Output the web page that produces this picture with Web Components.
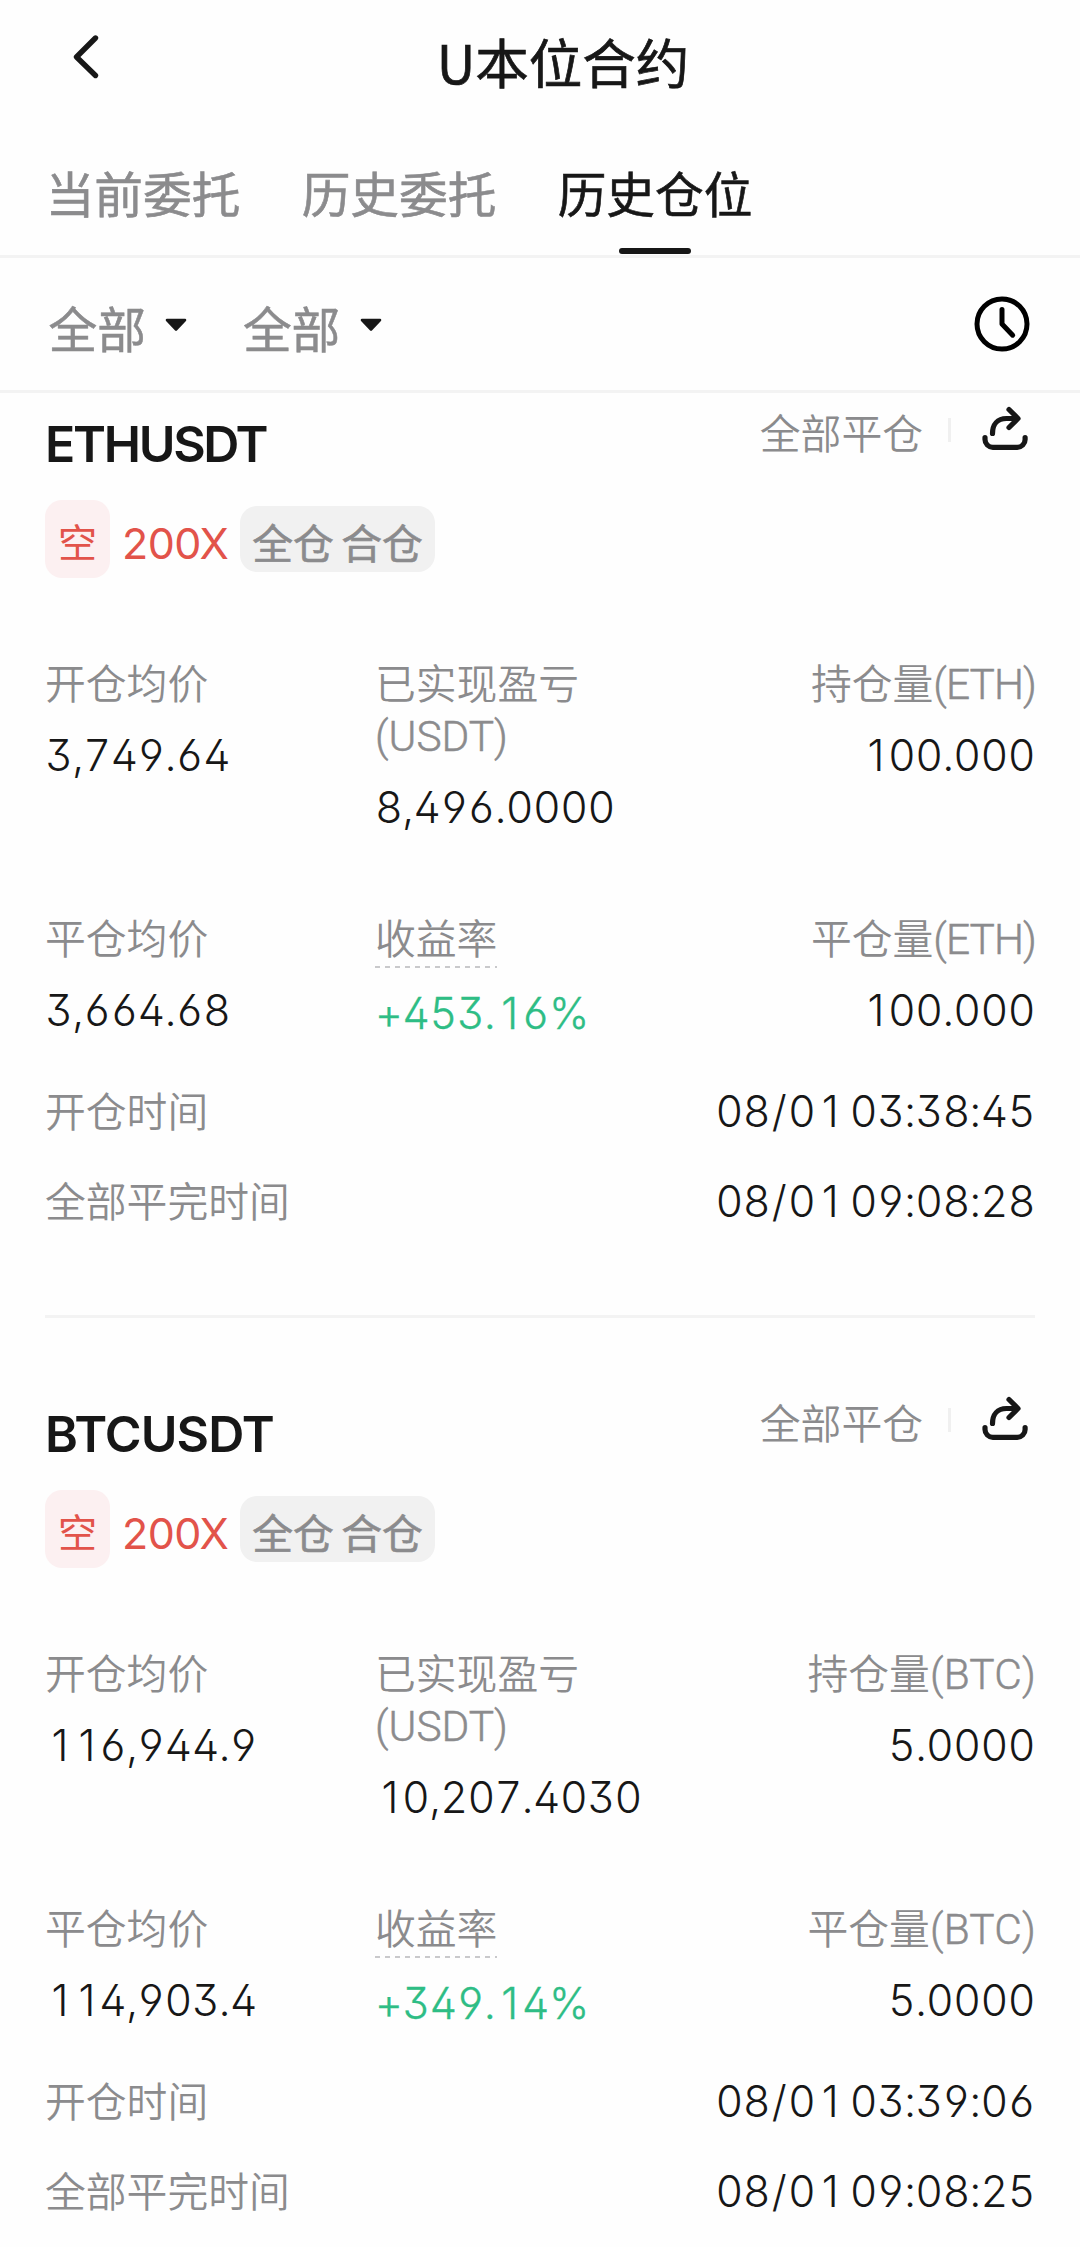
<!DOCTYPE html>
<html lang="zh-CN">
<head>
<meta charset="utf-8">
<title>U本位合约</title>
<style>
html,body{margin:0;background:#fefefe}
body{width:1080px;height:2247px;overflow:hidden;font-family:Inter,"Noto Sans CJK SC",sans-serif;color:#171717;--muted:#8b8b8d;--line:#f3f3f3}
</style>
</head>
<body>
<app-header>U本位合约</app-header>
<tab-bar>
  <tab-item>当前委托</tab-item><tab-item>历史委托</tab-item><tab-item active>历史仓位</tab-item>
</tab-bar>
<filter-bar><filter-drop>全部</filter-drop><filter-drop>全部</filter-drop></filter-bar>
<position-card symbol="ETHUSDT" spacing="-2.3" coin="ETH" coin-spacing="-0.9" open="3,749.64" pnl="8,496.0000" qty="100.000" close="3,664.68" roi="+453.16%" closed="100.000" t1="08/01 03:38:45" t2="08/01 09:08:28"></position-card>
<position-card last symbol="BTCUSDT" spacing="-0.9" coin="BTC" coin-spacing="0.2" open="116,944.9" pnl="10,207.4030" qty="5.0000" close="114,903.4" roi="+349.14%" closed="5.0000" t1="08/01 03:39:06" t2="08/01 09:08:25"></position-card>
<script>
const define = (name, html) => customElements.define(name, class extends HTMLElement {
  connectedCallback() {
    if (this.shadowRoot) return;
    const root = this.attachShadow({mode: 'open'});
    root.innerHTML = typeof html === 'function' ? html(this) : html;
  }
});

define('app-header', `<style>
:host{display:flex;height:128px;align-items:center;justify-content:center;position:relative;font-family:"Noto Sans CJK SC",sans-serif;font-size:53.500px;line-height:60px;-webkit-text-stroke:.7px}
svg{position:absolute;left:68px;top:32px}
.t{padding:0 0 6px 46px}
</style><svg width="36" height="50" viewBox="0 0 36 50" fill="none" stroke="#171717" stroke-width="5.400" stroke-linecap="round" stroke-linejoin="round"><path d="M27.500 6 8.500 25 27.500 43.500"/></svg><span class="t"><slot></slot></span>`);

define('tab-bar', `<style>:host{display:flex;height:127px;padding-left:45px;gap:60px;border-bottom:3px solid var(--line)}</style><slot></slot>`);
define('tab-item', `<style>
:host{display:flex;flex-direction:column;align-items:center;justify-content:space-between;font-size:48.700px;line-height:60px;color:var(--muted);-webkit-text-stroke:.6px;width:196px;white-space:nowrap}
:host([active]){color:#171717}
span{padding-top:38px}
b{display:none;width:72px;height:6px;border-radius:3px;background:#171717;margin-bottom:1px}
:host([active]) b{display:block}
</style><span><slot></slot></span><b></b>`);

define('filter-bar', `<style>
:host{display:flex;height:132px;padding:0 49px 0 48.500px;border-bottom:3px solid var(--line);align-items:center}
.l{display:flex;flex:1;gap:55.500px;padding-top:13px}
</style><div class="l"><slot></slot></div><svg width="60" height="60" viewBox="0 0 60 60" style="margin:0 -1px 1px 0" fill="none" stroke="#000" stroke-width="5" stroke-linecap="round" stroke-linejoin="round"><circle cx="30" cy="30" r="25"/><path d="M30 15.500V30l10.700 11.200"/></svg>`);
define('filter-drop', `<style>
:host{display:flex;align-items:center;font-size:48.700px;line-height:60px;color:var(--muted);gap:19.500px;-webkit-text-stroke:.5px}
svg{margin-top:-11px}
</style><slot></slot><svg width="22" height="14" viewBox="0 0 22 14"><path d="M2 2H20L11 11.500Z" fill="#171717" stroke="#171717" stroke-width="2.600" stroke-linejoin="round"/></svg>`);

// Tabular figures, except that "1" keeps its plain shape inside a full-width cell.
define('num-text', e => `<style>
:host{display:block;font-size:43px;line-height:52px;font-weight:300;letter-spacing:-.6px;word-spacing:-3.500px;font-kerning:none;font-feature-settings:"tnum","ss01","cv09";white-space:nowrap}
.one{font-feature-settings:"tnum" 0;padding:0 4.200px 0 6.500px}
.slash{padding:0 1.900px}
</style>${e.getAttribute('value').replace(/[1/]/g, c => `<span class="${c === '1' ? 'one' : 'slash'}">${c}</span>`)}`);

define('data-cell', e => `<style>
:host{display:flex;flex-direction:column;gap:19px;align-items:flex-start;font-size:40.800px;line-height:52px;color:var(--muted)}
:host([end]){align-items:flex-end}
:host([dashed]) .k{background:repeating-linear-gradient(90deg,#c9c9cb 0 5px,transparent 5px 10px) 0 100%/100% 2px no-repeat;padding-bottom:2px;margin-bottom:0}
.k{font-family:Roboto,"Noto Sans CJK SC",sans-serif;font-weight:350;width:max-content;margin:1px 0 -1px}
num-text{color:#171717}
:host([end]) num-text{margin-right:1px}
:host([dashed]) num-text{color:#2ebd85;-webkit-text-stroke:.3px}
</style><span class="k"><slot name="k"></slot></span><num-text value="${e.getAttribute('value')}"></num-text>`);

define('time-row', e => `<style>
:host{display:flex;justify-content:space-between;align-items:center;font-size:40.800px;line-height:52px;color:var(--muted)}
span{font-weight:350;padding-top:1px;margin-bottom:-1px}
num-text{color:#171717;margin-right:1px}
</style><span><slot></slot></span><num-text value="${e.getAttribute('value')}"></num-text>`);

define('share-icon', `<style>:host{display:block;width:50px;height:48px}</style><svg width="50" height="48" viewBox="0 0 50 48" fill="none" stroke="#171717" stroke-width="5.200" stroke-linecap="round" stroke-linejoin="round"><path d="M5 34.500v2a7.800 7.800 0 0 0 7.800 7.800h24.500a7.800 7.800 0 0 0 7.800-7.800v-2M12.500 30.500c0-9 5-15 14-15H37.500M29 6.500l9 9-9 9"/></svg>`);

define('position-card', e => {
  const a = n => e.getAttribute(n);
  return `<style>
:host{display:block;box-sizing:border-box;height:990px;padding:0 44px 0 45px}
:host([last]){height:auto}
.head{display:flex;justify-content:space-between;height:107px}
h2{margin:0;padding:21px 0 0;font-size:50px;line-height:60px;font-weight:600;letter-spacing:${a('spacing')}px}
.act{display:flex;align-items:flex-start;font-size:40.800px;line-height:52px;color:var(--muted)}
.act span{padding-top:15px;font-weight:350}
.act i{width:3px;height:24px;background:#f0f0f0;margin:25px 29px 0 25px}
.act share-icon{margin:10px 6px 0 0}
.tags{display:flex;align-items:center;height:78px}
.s{width:65px;height:78px;border-radius:17px;background:#fcf0f1;color:#e2534a;font-size:39px;line-height:86px;text-align:center}
.x{color:#e2534a;font-size:43px;line-height:60px;padding:8px 0 0 12px;width:118px;letter-spacing:-.5px;font-weight:400}
.m{width:195px;height:66px;border-radius:17px;background:#f1f1f1;color:var(--muted);font-size:40.800px;line-height:77px;text-align:center;word-spacing:-4px;white-space:nowrap;-webkit-text-stroke:.6px}
.grid{display:grid;grid-template-columns:330px 300px 1fr;padding-top:80px}
.g1{height:176px}
.g2{padding-top:79px;height:76px}
.u,.c{font-size:42.400px;line-height:0;-webkit-text-stroke:.5px}
.c{letter-spacing:${a('coin-spacing')}px}
.times{display:flex;flex-direction:column;gap:38px;padding-top:96px}
.rule{height:3px;background:var(--line);margin:88px 1px 0 0}
:host([last]) .rule{display:none}
</style>
<div class="head"><h2>${a('symbol')}</h2><div class="act"><span>全部平仓</span><i></i><share-icon></share-icon></div></div>
<div class="tags"><div class="s">空</div><div class="x">200X</div><div class="m">全仓 合仓</div></div>
<div class="grid g1"><data-cell value="${a('open')}"><span slot="k">开仓均价</span></data-cell><data-cell value="${a('pnl')}"><span slot="k">已实现盈亏<br><span class="u">(USDT)</span></span></data-cell><data-cell end value="${a('qty')}"><span slot="k">持仓量<span class="c">(${a('coin')})</span></span></data-cell></div>
<div class="grid g2"><data-cell value="${a('close')}"><span slot="k">平仓均价</span></data-cell><data-cell dashed value="${a('roi')}"><span slot="k">收益率</span></data-cell><data-cell end value="${a('closed')}"><span slot="k">平仓量<span class="c">(${a('coin')})</span></span></data-cell></div>
<div class="times"><time-row value="${a('t1')}">开仓时间</time-row><time-row value="${a('t2')}">全部平完时间</time-row></div>
<div class="rule"></div>`;
});
</script>
</body>
</html>
